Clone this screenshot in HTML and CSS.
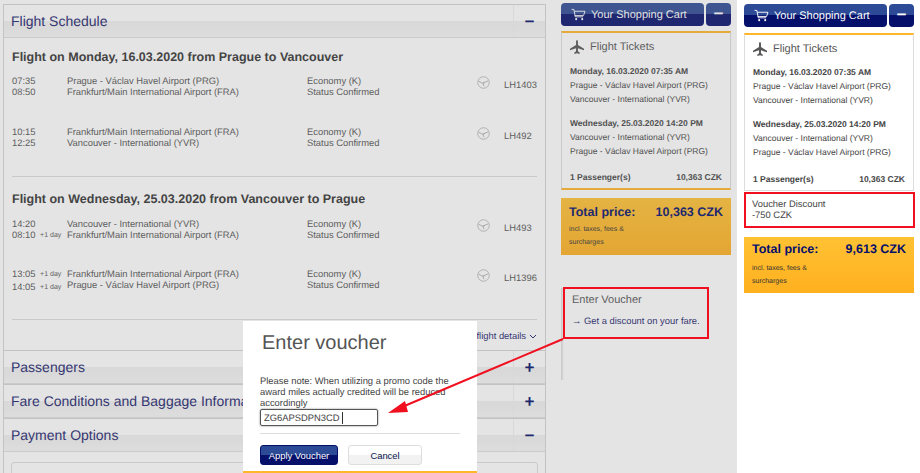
FILE: index.html
```html
<!DOCTYPE html>
<html lang="en">
<head>
  <meta charset="UTF-8" />
  <meta name="viewport" content="width=device-width, initial-scale=1.0"/>
  <title>Enter voucher</title>
  <link rel="stylesheet" href="styles.css">
</head>
<body>
  <svg class="icon-defs" width="0" height="0">
    <symbol id="cart" viewBox="0 0 16 14">
      <path d="M.5 1.500h2.500l1.500 8h8.500M3.500 3.500h11.500l-1.500 4.500h-9.500" fill="none" stroke="currentColor" stroke-width="1"/>
      <circle cx="5.500" cy="12" r="1.100" fill="currentColor"/>
      <circle cx="12" cy="12" r="1.100" fill="currentColor"/>
    </symbol>
    <symbol id="plane" viewBox="0 0 16 16">
      <path d="M8 0c.8 0 1.100 1.200 1.100 2.500v3.300L16 10v1.600L9.100 9.500v3.300l1.900 1.500V16L8 15.200 5 16v-1.700l1.900-1.500V9.500L0 11.600V10l6.900-4.200V2.500C6.900 1.200 7.200 0 8 0z" fill="currentColor"/>
    </symbol>
    <symbol id="crane" viewBox="0 0 14 14">
      <circle cx="7" cy="7" r="6.200" fill="none" stroke="currentColor" stroke-width=".8"/>
      <path d="M1.500 5.500 6 7.800 12 5.200M6 7.800 8.500 7M6.500 8l1 3" fill="none" stroke="currentColor" stroke-width=".9"/>
    </symbol>
  </svg>

  <div class="page">
    <div class="booking">
      <main class="main">
        <section class="panel">
          <header class="panel-head"><h2>Flight Schedule</h2><span class="toggle">&minus;</span></header>
          <div class="panel-body">
            <div class="flight">
              <h3>Flight on Monday, 16.03.2020 from Prague to Vancouver</h3>
              <div class="leg">
                <div class="times"><span>07:35</span><span>08:50</span></div>
                <div class="airports"><span>Prague - Václav Havel Airport (PRG)</span><span>Frankfurt/Main International Airport (FRA)</span></div>
                <div class="cabin"><span>Economy (K)</span><span>Status Confirmed</span></div>
                <svg class="crane"><use href="#crane"/></svg>
                <div class="number">LH1403</div>
              </div>
              <div class="leg">
                <div class="times"><span>10:15</span><span>12:25</span></div>
                <div class="airports"><span>Frankfurt/Main International Airport (FRA)</span><span>Vancouver - International (YVR)</span></div>
                <div class="cabin"><span>Economy (K)</span><span>Status Confirmed</span></div>
                <svg class="crane"><use href="#crane"/></svg>
                <div class="number">LH492</div>
              </div>
            </div>
            <div class="flight">
              <h3>Flight on Wednesday, 25.03.2020 from Vancouver to Prague</h3>
              <div class="leg">
                <div class="times"><span>14:20</span><span>08:10 <small>+1 day</small></span></div>
                <div class="airports"><span>Vancouver - International (YVR)</span><span>Frankfurt/Main International Airport (FRA)</span></div>
                <div class="cabin"><span>Economy (K)</span><span>Status Confirmed</span></div>
                <svg class="crane"><use href="#crane"/></svg>
                <div class="number">LH493</div>
              </div>
              <div class="leg">
                <div class="times"><span>13:05 <small>+1 day</small></span><span>14:05 <small>+1 day</small></span></div>
                <div class="airports"><span>Frankfurt/Main International Airport (FRA)</span><span>Prague - Václav Havel Airport (PRG)</span></div>
                <div class="cabin"><span>Economy (K)</span><span>Status Confirmed</span></div>
                <svg class="crane"><use href="#crane"/></svg>
                <div class="number">LH1396</div>
              </div>
            </div>
            <a class="details">flight details <svg width="8" height="5" viewBox="0 0 8 5"><path d="M1 1l3 3 3-3" fill="none" stroke="currentColor"/></svg></a>
          </div>
        </section>
        <section class="panel"><header class="panel-head"><h2>Passengers</h2><span class="toggle">+</span></header></section>
        <section class="panel"><header class="panel-head"><h2>Fare Conditions and Baggage Information</h2><span class="toggle">+</span></header></section>
        <section class="panel"><header class="panel-head"><h2>Payment Options</h2><span class="toggle">&minus;</span></header>
          <div class="payment-box"></div>
        </section>
      </main>

      <aside class="side">
        <div class="cart-bar">
          <div class="cart-btn"><svg class="cart-icon"><use href="#cart"/></svg>Your Shopping Cart</div>
          <div class="cart-min">&minus;</div>
        </div>
        <div class="tickets">
          <h4><svg class="plane"><use href="#plane"/></svg>Flight Tickets</h4>
          <p><b>Monday, 16.03.2020 07:35 AM</b><br>Prague - Václav Havel Airport (PRG)<br>Vancouver - International (YVR)</p>
          <p><b>Wednesday, 25.03.2020 14:20 PM</b><br>Vancouver - International (YVR)<br>Prague - Václav Havel Airport (PRG)</p>
          <div class="pax"><span>1 Passenger(s)</span><span>10,363 CZK</span></div>
        </div>
        <div class="total">
          <div class="total-row"><span>Total price:</span><span>10,363 CZK</span></div>
          <small>incl. taxes, fees &amp;<br>surcharges</small>
        </div>
        <div class="voucher-link">
          <h5>Enter Voucher</h5>
          <a>&rarr; Get a discount on your fare.</a>
        </div>
      </aside>

      <div class="backdrop"></div>

      <div class="modal">
        <h1>Enter voucher</h1>
        <p>Please note: When utilizing a promo code the award miles actually credited will be reduced accordingly</p>
        <div class="code">ZG6APSDPN3CD<i></i></div>
        <div class="modal-actions">
          <button class="apply">Apply Voucher</button>
          <button class="cancel">Cancel</button>
        </div>
      </div>
    </div>

    <aside class="side result">
      <div class="cart-bar">
        <div class="cart-btn"><svg class="cart-icon"><use href="#cart"/></svg>Your Shopping Cart</div>
        <div class="cart-min">&minus;</div>
      </div>
      <div class="tickets">
        <h4><svg class="plane"><use href="#plane"/></svg>Flight Tickets</h4>
        <p><b>Monday, 16.03.2020 07:35 AM</b><br>Prague - Václav Havel Airport (PRG)<br>Vancouver - International (YVR)</p>
        <p><b>Wednesday, 25.03.2020 14:20 PM</b><br>Vancouver - International (YVR)<br>Prague - Václav Havel Airport (PRG)</p>
        <div class="pax"><span>1 Passenger(s)</span><span>10,363 CZK</span></div>
      </div>
      <div class="discount">Voucher Discount<br>-750 CZK</div>
      <div class="total">
        <div class="total-row"><span>Total price:</span><span>9,613 CZK</span></div>
        <small>incl. taxes, fees &amp;<br>surcharges</small>
      </div>
    </aside>
  </div>

  <!-- annotation on top of the screenshot -->
  <div class="mark"></div>
  <svg class="arrow" width="920" height="473" viewBox="0 0 920 473">
    <path d="M563 339 402 407" stroke="#f01020" stroke-width="2" fill="none"/>
    <path d="M388 413 405 401 408 412z" fill="#f01020"/>
  </svg>
</body>
</html>
```

FILE: styles.css
```css
* {
  box-sizing: border-box;
}

body {
  margin: 0;
  background: #fff;
  font-family: "Liberation Sans", Arial, sans-serif;
  font-size: 10px;
  color: #444;
  height: 473px;
  overflow: hidden;
  text-rendering: geometricPrecision;
}

.icon-defs {
  position: absolute;
}

.page {
  display: flex;
  height: 473px;
}

.booking {
  position: relative;
  display: flex;
  width: 737px;
  height: 473px;
  padding: 4px 0 0 3px;
  background: #fff;
  overflow: hidden;
}

.backdrop {
  position: absolute;
  inset: 0;
  background: rgba(128, 128, 128, 0.21);
}

/* left column */
.main {
  width: 543px;
  flex: none;
}

.panel {
  border: 1px solid #d6d6d6;
  border-width: 1px 1px 0;
}

.panel-head {
  display: flex;
  justify-content: space-between;
  height: 33px;
  background: linear-gradient(#fff 0, #fff 50%, #f0f0f0 50%, #f6f6f6 100%);
  border-bottom: 1px solid #e0e0e0;
}

.panel-head h2 {
  margin: 0;
  padding-left: 7px;
  font-size: 14px;
  font-weight: normal;
  line-height: 32px;
  color: #1c1e6e;
  white-space: nowrap;
}

.toggle {
  width: 32px;
  border-left: 1px solid #f0f0f0;
  text-align: center;
  font-size: 17px;
  font-weight: bold;
  line-height: 33px;
  color: #05106b;
}

.panel-body {
  height: 312px;
  padding: 10px 8px 0;
}

.flight {
  height: 129px;
  border-bottom: 1px solid #ddd;
}

.flight + .flight {
  height: 143px;
  padding-top: 13px;
}

.flight h3 {
  margin: 0 0 9px;
  font-size: 12.500px;
  line-height: 18px;
  color: #333;
}

.flight + .flight h3 {
  margin-bottom: 10px;
}

.leg {
  display: grid;
  grid-template-columns: 55px 240px 170px 13px auto;
  align-items: start;
  height: 51px;
  font-size: 9.400px;
  line-height: 11px;
  color: #555;
}

.flight + .flight .leg {
  height: 50px;
}

.times,
.airports,
.cabin {
  display: flex;
  flex-direction: column;
  white-space: nowrap;
}

.times small {
  font-size: 7px;
  margin-left: 2px;
  position: relative;
  top: -1px;
}

.crane {
  width: 13px;
  height: 13px;
  color: #aaa;
  margin-top: 1px;
}

.number {
  margin: 4px 0 0 14px;
  white-space: nowrap;
}

.details {
  display: flex;
  justify-content: flex-end;
  align-items: center;
  gap: 3px;
  margin-top: 10px;
  line-height: 12px;
  font-size: 9.400px;
  color: #1c1e6e;
}

.payment-box {
  height: 30px;
  margin: 10px 7px;
  border: 1px solid #ddd;
  border-radius: 3px;
  background: #fff;
}

/* shopping cart column */
.side {
  width: 170px;
  flex: none;
  margin-left: 15px;
  margin-top: -1px;
}

.side.result {
  margin: 4px 0 0 7px;
}

.cart-bar {
  display: flex;
  gap: 2px;
  height: 23px;
}

.cart-btn,
.cart-min {
  border-radius: 4px;
  color: #fff;
  background: linear-gradient(#2d4a96 0, #2d4a96 50%, #05106b 50%, #05106b 100%);
}

.cart-btn {
  flex: 1;
  display: flex;
  align-items: center;
  font-size: 11px;
}

.cart-icon {
  width: 15px;
  height: 13px;
  margin: 0 5px 0 10px;
}

.cart-min {
  width: 25px;
  text-align: center;
  font-size: 17px;
  font-weight: bold;
  line-height: 21px;
}

.tickets {
  height: 159px;
  margin-top: 5px;
  padding: 0 8px;
  background: #fff;
  border: 1px solid #ddd;
  border-top: 2px solid #ffb72a;
  font-size: 8.500px;
  line-height: 14px;
  color: #444;
  position: relative;
}

.booking .tickets {
  border-bottom: 2px solid #ffb72a;
}

.result .tickets {
  height: 158px;
  margin-top: 6px;
}

.tickets h4 {
  display: flex;
  align-items: center;
  gap: 6px;
  margin: 6px 0 9px;
  height: 16px;
  font-size: 11px;
  font-weight: normal;
  color: #555;
}

.result .tickets h4 {
  margin-bottom: 8px;
}

.plane {
  width: 14px;
  height: 14px;
  color: #555;
}

.tickets p {
  margin: 0 0 10px;
  white-space: nowrap;
}

.pax {
  position: absolute;
  left: 8px;
  right: 8px;
  bottom: 4px;
  display: flex;
  justify-content: space-between;
  font-weight: bold;
}

.total {
  height: 57px;
  margin-top: 8px;
  padding: 6px 8px;
  background: linear-gradient(#ffc233, #ffb01f);
  color: #333;
}

.total-row {
  display: flex;
  justify-content: space-between;
  font-size: 12.500px;
  font-weight: bold;
  line-height: 16px;
  color: #05106b;
}

.total small {
  display: block;
  margin-top: 3px;
  font-size: 7px;
  line-height: 13px;
}

.discount {
  height: 36px;
  margin: 1px -1px 0 0;
  padding: 4px 6px;
  background: #fff;
  border: 2px solid #f01020;
  font-size: 9.400px;
  line-height: 11px;
  color: #444;
}

.result .total {
  height: 56px;
  margin-top: 9px;
  padding-top: 4px;
}

.result .total small {
  margin-top: 5px;
}

.voucher-link {
  height: 92px;
  margin-top: 33px;
  padding: 5px 11px;
  background: linear-gradient(90deg, #d8d8d8 0, #fff 3px);
}

.voucher-link h5 {
  margin: 1px 0 9px;
  font-size: 11px;
  font-weight: normal;
  line-height: 12px;
  color: #555;
}

.voucher-link a {
  font-size: 9.400px;
  color: #1c1e6e;
}

/* modal */
.modal {
  position: absolute;
  left: 243px;
  top: 321px;
  width: 234px;
  height: 152px;
  padding: 9px 17px 0;
  background: #fff;
  border-bottom: 2px solid #ffb72a;
}

.modal h1 {
  margin: 0 0 0 2px;
  font-size: 20px;
  font-weight: normal;
  line-height: 26px;
  color: #555;
}

.modal p {
  margin: 19px 0 1px;
  font-size: 9.400px;
  line-height: 11px;
  color: #444;
}

.code {
  display: flex;
  align-items: center;
  width: 118px;
  height: 17px;
  padding-left: 3px;
  border: 1px solid #555;
  box-shadow: 0 0 2px #777;
  border-radius: 2px;
  font-size: 9.400px;
  color: #444;
}

.code i {
  width: 1px;
  height: 12px;
  margin-left: 2px;
  background: #333;
}

.modal-actions {
  display: flex;
  gap: 10px;
  margin-top: 7px;
  padding-top: 11px;
  border-top: 1px solid #ddd;
}

.modal button {
  height: 20px;
  padding: 0;
  border-radius: 3px;
  font-family: inherit;
  font-size: 9.400px;
}

.apply {
  width: 78px;
  border: 1px solid #05106b;
  color: #fff;
  background: linear-gradient(#2d4a96 0, #2d4a96 50%, #05106b 50%);
}

.cancel {
  width: 74px;
  border: 1px solid #ddd;
  color: #05164d;
  background: linear-gradient(#fff 50%, #f2f2f2 50%);
}

/* red annotations */
.mark {
  position: absolute;
  left: 563px;
  top: 287px;
  width: 146px;
  height: 52px;
  border: 2px solid #f01020;
}

.arrow {
  position: absolute;
  left: 0;
  top: 0;
}
```
